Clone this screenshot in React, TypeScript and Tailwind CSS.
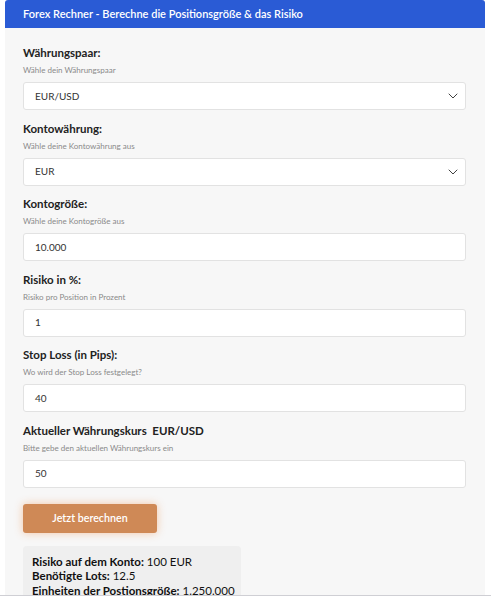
import { ChevronDown } from 'lucide-react'

/* ── Field definitions ─────────────────────── */

interface Field {
  label: string
  hint: string
  value: string
  select?: boolean
}

const FIELDS: Field[] = [
  { label: 'Währungspaar:', hint: 'Wähle dein Währungspaar', value: 'EUR/USD', select: true },
  { label: 'Kontowährung:', hint: 'Wähle deine Kontowährung aus', value: 'EUR', select: true },
  { label: 'Kontogröße:', hint: 'Wähle deine Kontogröße aus', value: '10.000' },
  { label: 'Risiko in %:', hint: 'Risiko pro Position in Prozent', value: '1' },
  { label: 'Stop Loss (in Pips):', hint: 'Wo wird der Stop Loss festgelegt?', value: '40' },
  { label: 'Aktueller Währungskurs\u00a0 EUR/USD', hint: 'Bitte gebe den aktuellen Währungskurs ein', value: '50' },
]

const RESULTS = [
  { label: 'Risiko auf dem Konto:', value: '100 EUR' },
  { label: 'Benötigte Lots:', value: '12.5' },
  { label: 'Einheiten der Postionsgröße:', value: '1.250.000' },
]

/* ── Component ─────────────────────────────── */

function FormField({ field }: { field: Field }) {
  return (
    <div className="mb-[10.6px]">
      <div className="text-[11.5px] leading-4 font-bold text-[#222]">{field.label}</div>
      <div className="mt-[3px] text-[8px] leading-3 text-[#8a8a8a]">{field.hint}</div>
      <div className="mt-[6px] h-[28px] flex items-center justify-between bg-white border border-[#e2e2e2] rounded-[3px] pl-[11px] pr-[4px]">
        <span className="text-[10px] text-[#333]">{field.value}</span>
        {field.select && <ChevronDown size={16} strokeWidth={1.4} className="text-[#333]" />}
      </div>
    </div>
  )
}

export default function App() {
  return (
    <div className="h-[598px] overflow-hidden bg-white flex flex-col" style={{ fontFamily: 'Lato, "Open Sans", sans-serif' }}>
      <div className="flex-1 min-h-0 overflow-hidden">
        <div className="ml-[5px] w-[480px] h-full flex flex-col bg-[#f7f7f7] rounded-t-[3px] overflow-hidden">
          <div className="h-[28px] shrink-0 bg-[#2a5bd5] flex items-center pl-[18px]">
            <span className="text-[11px] font-semibold text-white">
              Forex Rechner - Berechne die Positionsgröße &amp; das Risiko
            </span>
          </div>

          <div className="pt-[17px] pl-[18px] pr-[19px]">
            {FIELDS.map(f => <FormField key={f.label} field={f} />)}

            <button className="mt-[5px] w-[134px] h-[29px] rounded-[3px] bg-[#cf8956] text-white text-[10.7px] font-semibold shadow-[0_0_8px_rgba(240,140,70,0.45)]">
              Jetzt berechnen
            </button>

            <div className="mt-[13px] w-[218px] bg-[#efefef] rounded-[4px] pt-[9px] pb-3 pl-[9px] text-[11.5px] leading-[14.5px] text-[#111]">
              {RESULTS.map(r => (
                <div key={r.label}>
                  <span className="font-bold">{r.label}</span> {r.value}
                </div>
              ))}
            </div>
          </div>
        </div>
      </div>
      <div className="h-[3px] shrink-0 border-t border-[#cfcfd4] bg-white" />
    </div>
  )
}
